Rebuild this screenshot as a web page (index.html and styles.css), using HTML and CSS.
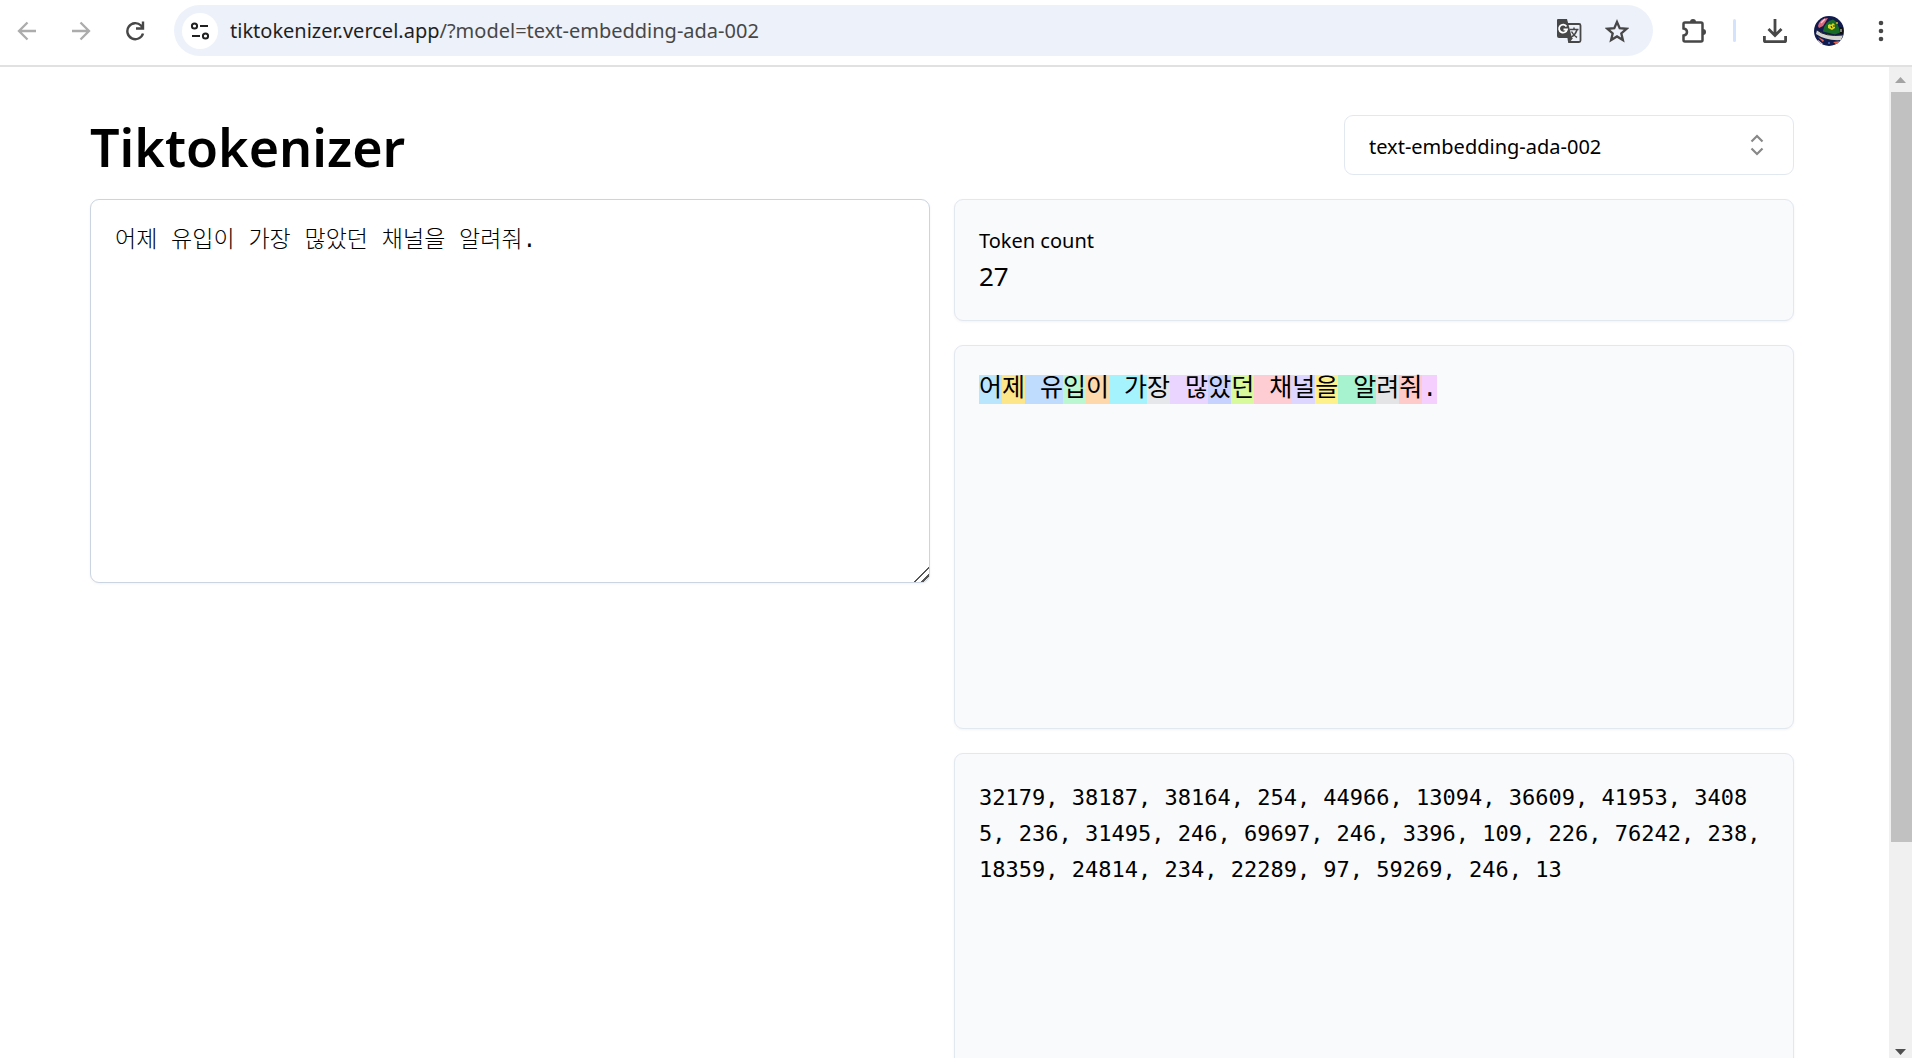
FILE: index.html
```html
<!DOCTYPE html>
<html lang="ko">
<head>
    <meta charset="UTF-8">
    <meta name="viewport" content="width=device-width, initial-scale=1.0">
    <title>Tiktokenizer</title>
    <link rel="stylesheet" href="styles.css">
</head>
<body>
    <div class="toolbar">
        <div class="nav-buttons">
            <button class="icon-button muted" aria-label="Back">
                <svg width="20" height="20" viewBox="0 0 20 20" fill="none" stroke="currentColor" stroke-width="2.300"><path d="M19 10H3M10.500 1.500L2 10l8.500 8.500"/></svg>
            </button>
            <button class="icon-button muted" aria-label="Forward">
                <svg width="20" height="20" viewBox="0 0 20 20" fill="none" stroke="currentColor" stroke-width="2.300"><path d="M1 10h16M9.500 1.500L18 10l-8.500 8.500"/></svg>
            </button>
            <button class="icon-button" aria-label="Reload">
                <svg width="20" height="20" viewBox="0 0 20 20" fill="none" stroke="currentColor" stroke-width="2.400"><path d="M18 12.500A8 8 0 1 1 16 4.500L18 7M18 .5V7.500H11"/></svg>
            </button>
        </div>
        <div class="address-bar">
            <button class="site-info" aria-label="Site information">
                <svg width="20" height="20" viewBox="0 0 20 20" fill="none" stroke="currentColor" stroke-width="2"><circle cx="4.500" cy="5" r="2.600"/><path d="M10 5h8M2 15h8"/><circle cx="15.500" cy="15" r="2.600"/></svg>
            </button>
            <a class="url" href="#"><span class="host">tiktokenizer.vercel.app</span>/?model=text-embedding-ada-002</a>
            <button class="icon-button" aria-label="Translate">
                <svg width="26" height="26" viewBox="0 0 26 26" fill="none"><path d="M10 6h13q1.500 0 1.500 1.500v15q0 1.500-1.500 1.500H13z" stroke="currentColor" stroke-width="1.800"/><path d="M2 1h9l5 19H3q-2 0-2-2V2q0-1 1-1z" fill="currentColor"/><path d="M10.500 8.500A4 4 0 1 0 11 11.500H7.500" stroke="#fff" stroke-width="1.800"/><path d="M12 20l2 4 3-4z" fill="currentColor"/><path d="M13.500 11.500h9M18 9.500v2M21 12q-1.500 4.500-6 7.500M15.500 13.500q2 4 5.500 6" stroke="currentColor" stroke-width="1.500"/></svg>
            </button>
            <button class="icon-button" aria-label="Bookmark">
                <svg width="24" height="24" viewBox="0 0 24 24" fill="none" stroke="currentColor" stroke-width="2.300"><path d="M12 3l2.700 6.200 6.800.6-5.200 4.500 1.600 6.700-5.900-3.600L6.100 21l1.600-6.700L2.500 9.800l6.800-.6z"/></svg>
            </button>
        </div>
        <div class="actions">
            <button class="icon-button" aria-label="Extensions">
                <svg width="26" height="26" viewBox="0 0 26 26" fill="none"><path d="M4 4.500h16q1.500 0 1.500 1.500v16q0 1.500-1.500 1.500H4q-1.500 0-1.500-1.500V17.500q3.500-.5 3.500-3.500t-3.500-3.500V6Q2.500 4.500 4 4.500z" stroke="currentColor" stroke-width="2.500"/><path d="M9 4a3 3 0 0 1 6 0zM22 11a3 3 0 0 1 0 6z" fill="currentColor"/></svg>
            </button>
            <span class="divider"></span>
            <button class="icon-button" aria-label="Downloads">
                <svg width="26" height="26" viewBox="0 0 26 26" fill="none" stroke="currentColor" stroke-width="2.800"><path d="M13 1v16M6.500 11l6.500 6.500 6.500-6.500M2.400 18v4.500q0 1.200 1.200 1.200h18.800q1.200 0 1.200-1.200V18"/></svg>
            </button>
            <button class="icon-button" aria-label="Profile">
                <svg width="30" height="30" viewBox="0 0 30 30"><clipPath id="face"><circle cx="15" cy="15" r="15"/></clipPath><g clip-path="url(#face)"><path fill="#111b4d" d="M0 0h30v30H0z"/><path d="M4 10Q6 2 14 2l-5 8-4 2z" fill="#d9687c"/><path d="M7 7l4-4" stroke="#f6c5cd" stroke-width="1.500"/><path d="M9 15Q11 5 19 3.500q5 2 7 13l-5 2-12-3z" fill="#176b26"/><path d="M14 9l2-1 1 1 2-2 2 2v3l-3 2-4-2z" fill="#d9d51f"/><path d="M17 10l1 2M20 9v2" stroke="#222"/><path d="M3 14q8 7 26 5l-2 5Q12 25 2 18z" fill="#d4d4ce"/><path d="M3 14q8 7 26 5" fill="none" stroke="#222"/><path d="M19 26l7-1-3 4zM4 21l6 3-1 2z" fill="#e8674f"/><path d="M4 24l5 4-5 2z" fill="#f4d6e8"/><path d="M26 11h3v7h-3z" fill="#111"/><path d="M27 13v3" stroke="#eee"/><circle cx="23" cy="7" r="1" fill="#d8b62c"/><circle cx="15" cy="27" r="1" fill="#5273c7"/></g></svg>
            </button>
            <button class="icon-button menu-button" aria-label="Menu">
                <svg width="6" height="22" viewBox="0 0 6 22" fill="currentColor"><circle cx="3" cy="3" r="2.300"/><circle cx="3" cy="11" r="2.300"/><circle cx="3" cy="19" r="2.300"/></svg>
            </button>
        </div>
    </div>

    <div class="viewport">
        <main class="page">
            <header class="header">
                <h1>Tiktokenizer</h1>
                <div class="model-select">
                    <select aria-label="Model">
                        <option>text-embedding-ada-002</option>
                    </select>
                    <svg class="chevrons" width="14" height="22" viewBox="0 0 14 22" fill="none" stroke="#888" stroke-width="2.200"><path d="M1.500 7.500L7 2l5.500 5.500M1.500 14.500L7 20l5.500-5.500"/></svg>
                </div>
            </header>
            <div class="columns">
                <textarea class="input" aria-label="Text to tokenize" spellcheck="false">어제 유입이 가장 많았던 채널을 알려줘.</textarea>
                <section class="output">
                    <div class="card count">
                        <p class="label">Token count</p>
                        <p class="number">27</p>
                    </div>
                    <pre class="card tokens"><span class="sky">어</span><span class="amber">제</span><span class="blue"> 유</span><span class="green">입</span><span class="orange">이</span><span class="cyan"> 가</span><span class="gray">장</span><span class="purple"> 많</span><span class="indigo">았</span><span class="lime">던</span><span class="rose"> 채</span><span class="violet">널</span><span class="yellow">을</span><span class="emerald"> 알</span><span class="zinc">려</span><span class="red">줘</span><span class="fuchsia">.</span></pre>
                    <pre class="card ids">32179, 38187, 38164, 254, 44966, 13094, 36609, 41953, 34085, 236, 31495, 246, 69697, 246, 3396, 109, 226, 76242, 238, 18359, 24814, 234, 22289, 97, 59269, 246, 13</pre>
                </section>
            </div>
        </main>
        <div class="scrollbar">
            <svg width="23" height="25" viewBox="0 0 23 25" fill="#a3a3a3"><path d="M6 16l5.500-6 5.500 6z"/></svg>
            <div class="thumb"></div>
            <div class="track"></div>
            <svg width="23" height="16" viewBox="0 0 23 16" fill="#505050"><path d="M6 7h11l-5.500 6z"/></svg>
        </div>
    </div>
</body>
</html>
```
FILE: styles.css
```css
* {
    box-sizing: border-box;
}

body {
    margin: 0;
    height: 100vh;
    display: flex;
    flex-direction: column;
    overflow: hidden;
    background-color: #fff;
    color: #000;
    font-family: "Noto Sans", "Noto Sans CJK KR", sans-serif;
}

h1, p, pre {
    margin: 0;
}

button {
    padding: 0;
    border: none;
    background: none;
    cursor: pointer;
}

svg {
    display: block;
}

/* browser toolbar */
.toolbar {
    display: flex;
    align-items: center;
    padding: 5px 28px 9px 17px;
    border-bottom: 2px solid #e1e1e1;
}

.nav-buttons {
    display: flex;
    gap: 34px;
    margin-right: 29px;
}

.icon-button {
    color: #474747;
}

.icon-button.muted {
    color: #acacac;
}

.address-bar {
    flex: 1;
    display: flex;
    align-items: center;
    gap: 23px;
    height: 51px;
    padding: 0 24px 0 8px;
    border-radius: 26px;
    background-color: #edf1fa;
}

.site-info {
    display: flex;
    align-items: center;
    justify-content: center;
    width: 36px;
    height: 36px;
    margin-right: -11px;
    border-radius: 50%;
    background-color: #fff;
    color: #1f1f1f;
}

.url {
    flex: 1;
    color: #474747;
    font-size: 20px;
    text-decoration: none;
}

.host {
    color: #1f1f1f;
}

.actions {
    display: flex;
    align-items: center;
    gap: 26px;
    margin-left: 28px;
}

.menu-button {
    margin-left: 8px;
}

.divider {
    width: 3px;
    height: 23px;
    border-radius: 2px;
    background-color: #d3e3fd;
}

/* page */
.viewport {
    flex: 1;
    min-height: 0;
    display: flex;
}

.page {
    flex: 1;
    min-width: 0;
    padding: 48px 95px 0 90px;
    overflow: hidden;
}

.header {
    display: flex;
    align-items: center;
    justify-content: space-between;
    height: 60px;
    margin-bottom: 24px;
}

h1 {
    padding-top: 4px;
    font-size: 52px;
    font-weight: 600;
    line-height: 60px;
}

.model-select {
    position: relative;
    width: 450px;
}

.model-select select {
    width: 100%;
    height: 60px;
    padding: 2px 24px 0;
    border: 1px solid #e2e8f0;
    border-radius: 9px;
    background-color: #fff;
    color: #000;
    font-family: inherit;
    font-size: 20px;
    appearance: none;
}

.chevrons {
    position: absolute;
    top: 19px;
    right: 30px;
    pointer-events: none;
}

.columns {
    display: grid;
    grid-template-columns: 1fr 1fr;
    align-items: start;
    gap: 24px;
}

.input {
    height: 384px;
    padding: 26px 24px 24px;
    border: 1px solid #cbd5e1;
    border-radius: 9px;
    color: #000;
    font-family: "Liberation Mono", "Noto Sans CJK KR", monospace;
    font-size: 23px;
    font-weight: 300;
    line-height: 30px;
    box-shadow: 0 1px 3px rgba(0, 0, 0, 0.05);
}

.input::-webkit-resizer {
    background: linear-gradient(135deg, transparent 48%, #555 48%, #555 56%, transparent 56%, transparent 73%, #555 73%, #555 81%, transparent 81%);
}

.output {
    display: flex;
    flex-direction: column;
    gap: 24px;
    min-width: 0;
}

.card {
    padding: 26px 24px 24px;
    border: 1px solid #e2e8f0;
    border-radius: 9px;
    background-color: #f8fafc;
    box-shadow: 0 1px 3px rgba(0, 0, 0, 0.05);
}

.count {
    height: 122px;
}

.label {
    font-size: 20px;
    line-height: 30px;
}

.number {
    font-size: 26px;
    line-height: 40px;
}

.tokens,
.ids {
    min-height: 384px;
    line-height: 36px;
    white-space: pre-wrap;
    word-break: break-all;
}

.tokens {
    font-family: "Liberation Mono", "Noto Sans CJK KR", monospace;
    font-size: 25px;
}

.ids {
    font-family: "DejaVu Sans Mono", monospace;
    font-size: 22px;
}

.sky { background-color: #bae6fd; }
.amber { background-color: #fde68a; }
.blue { background-color: #bfdbfe; }
.green { background-color: #bbf7d0; }
.orange { background-color: #fed7aa; }
.cyan { background-color: #a5f3fc; }
.gray { background-color: #e5e7eb; }
.purple { background-color: #e9d5ff; }
.indigo { background-color: #c7d2fe; }
.lime { background-color: #d9f99d; }
.rose { background-color: #fecdd3; }
.violet { background-color: #ddd6fe; }
.yellow { background-color: #fef08a; }
.emerald { background-color: #a7f3d0; }
.zinc { background-color: #e4e4e7; }
.red { background-color: #fecaca; }
.fuchsia { background-color: #f5d0fe; }

.scrollbar {
    display: flex;
    flex-direction: column;
    width: 23px;
    background-color: #f0f0f0;
}

.thumb {
    flex: 75;
    margin-left: 2px;
    background-color: #c1c1c1;
}

.track {
    flex: 20;
}
```
